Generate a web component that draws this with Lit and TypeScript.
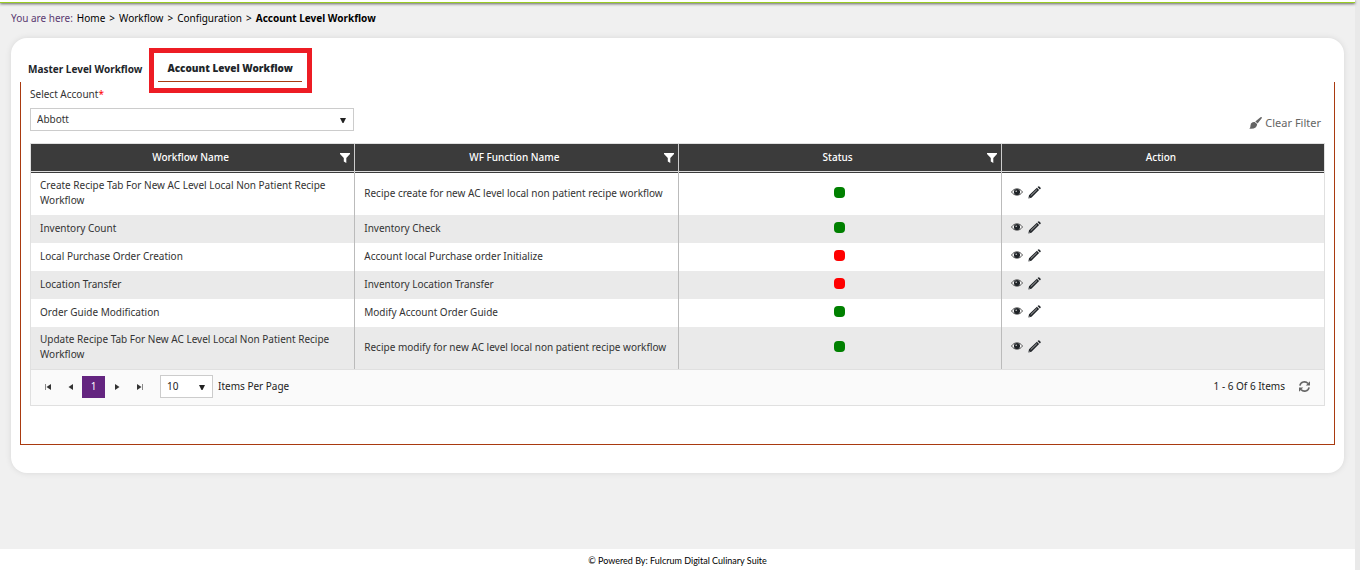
import { LitElement, html, css, svg } from "lit";
import { customElement, state } from "lit/decorators.js";
import { classMap } from "lit/directives/class-map.js";

interface WorkflowRow {
  name: string;
  fn: string;
  active: boolean;
}

const ROWS: WorkflowRow[] = [
  { name: "Create Recipe Tab For New AC Level Local Non Patient Recipe Workflow", fn: "Recipe create for new AC level local non patient recipe workflow", active: true },
  { name: "Inventory Count", fn: "Inventory Check", active: true },
  { name: "Local Purchase Order Creation", fn: "Account local Purchase order Initialize", active: false },
  { name: "Location Transfer", fn: "Inventory Location Transfer", active: false },
  { name: "Order Guide Modification", fn: "Modify Account Order Guide", active: true },
  { name: "Update Recipe Tab For New AC Level Local Non Patient Recipe Workflow", fn: "Recipe modify for new AC level local non patient recipe workflow", active: true },
];

const icon = (w: number, h: number, body: unknown) =>
  html`<svg width=${w} height=${h} viewBox="0 0 ${w} ${h}" aria-hidden="true">${body}</svg>`;

const filterIcon = icon(10, 10, svg`<path fill="#fff" d="M0 0h10v1L6.300 5v5L3.800 8.400V5L0 1z"/>`);
const eyeIcon = icon(12, 8, svg`<path fill="#fff" stroke="#444" stroke-width=".9" d="M.5 4C2 1.800 3.900.8 6 .8S10 1.800 11.500 4C10 6.200 8.100 7.200 6 7.200S2 6.200.5 4z"/><circle cx="6" cy="4" r="3.100" fill="#212529"/><circle cx="5.200" cy="3.200" r=".8" fill="#ccc"/>`);
const pencilIcon = icon(13, 13, svg`<path fill="#212529" d="M.4 12.600l.6-3.300 7.900-7.600 2.200 2.200-7.700 7.800zM9.500 1.100l.8-.7q.5-.4 1 0l1.300 1.300q.4.500 0 1l-.8.800z"/><path stroke="#bbb" stroke-width=".9" d="M2.700 9.700l6.200-6M1.300 11.200l.6.600"/>`);
const brushIcon = icon(13, 12, svg`<path fill="#656565" d="M12.700.2q.5.400 0 1.100L8.600 6.500 6.300 4.600 11.500.3q.7-.5 1.200-.1zM5.700 5.100l2.400 2q.1 2.200-1.500 3.400Q4.500 12 .2 11.600q1.300-.7 1.200-2.400Q1.300 6 3.600 5.300q1.100-.4 2.100-.2z"/>`);
const arrowDown = icon(6, 5, svg`<path fill="#222" d="M0 0h6L3.500 5h-1z"/>`);
const refreshIcon = icon(11, 11, svg`<path fill="none" stroke="#666" stroke-width="1.600" d="M.9 4.700A4.600 4.600 0 0 1 9 2.600M10.100 6.300A4.600 4.600 0 0 1 2 8.400"/><path fill="#666" d="M11 .2v4.200H6.800zM0 10.800V6.600h4.200z"/>`);
const firstIcon = icon(6, 6, svg`<path fill="#888" d="M0 0h1v6H0z"/><path fill="#333" d="M6 0v6L1.500 3z"/>`);
const prevIcon = icon(6, 6, svg`<path fill="#333" d="M5 0v6L.5 3z"/>`);
const nextIcon = icon(6, 6, svg`<path fill="#333" d="M1 0v6l4.500-3z"/>`);
const lastIcon = icon(6, 6, svg`<path fill="#888" d="M5 0h1v6H5z"/><path fill="#333" d="M0 0v6l4.500-3z"/>`);

@customElement("app-root")
export class AppRoot extends LitElement {
  @state() private tab = "account";

  static styles = css`
    :host {
      display: block;
      font-family: "Noto Sans", "Open Sans", sans-serif;
      font-size: 10px;
      line-height: 15px;
      color: #333;
    }
    *, *::before, *::after { box-sizing: border-box; }
    button, select { font: inherit; color: inherit; background: none; border: 0; margin: 0; padding: 0; }
    button { cursor: pointer; }
    a { color: inherit; text-decoration: none; }
    svg { display: block; }
    .page { display: flex; flex-direction: column; min-height: 100vh; background: #f0f0f0; border-right: 5px solid #e9e9e9; }
    .topbar { height: 3px; background: #fff; border-bottom: 1px solid #9c2; box-shadow: 0 1px 3px rgba(0, 0, 0, 0.6); }
    .crumbs { display: flex; gap: 4px; padding: 8px 11px 0; color: #000; }
    .lead { color: #5b3a70; }
    .crumbs b, .tab { font-weight: 700; }
    .card { margin: 12px 11px 0; padding: 12px 9px 28px; min-height: 435px; background: #fff; border-radius: 16px; box-shadow: 0 0 6px rgba(0, 0, 0, 0.1); display: flex; flex-direction: column; }
    .tabs { display: flex; align-items: flex-start; padding: 0 8px; gap: 16px; height: 32px; }
    .tab { position: relative; height: 32px; padding: 12px 0 5px; line-height: 15px; color: #212529; }
    .tab.active { padding: 11px 9px 5px; border-bottom: 1px solid #a93a10; font-weight: 900; }
    .tab.active::after { content: ""; position: absolute; inset: -2px -10px -12px -9px; border: 5px solid #ed1c24; }
    .panel { flex: 1; border: 1px solid #a93a10; border-top: 0; padding: 5px 9px 38px; }
    .filters { display: flex; justify-content: space-between; align-items: flex-end; margin-bottom: 12px; }
    .field { display: flex; flex-direction: column; gap: 6px; width: 25%; }
    .req { color: #f00; }
    .picker { position: relative; display: block; }
    .picker select { appearance: none; width: 100%; height: 23px; padding: 0 6px 1px; border: 1px solid #ccc; background: #fff; }
    .picker svg { position: absolute; right: 8px; top: 10px; pointer-events: none; }
    .clear { display: flex; align-items: center; gap: 3px; margin: 0 4px 1px 0; color: #656565; font-size: 11px; }
    .grid { border: 1px solid #e0e0e0; }
    table { width: 100%; border-collapse: separate; border-spacing: 0; table-layout: fixed; }
    th { height: 29px; padding: 0; background: #3b3b3b; color: #fff; font-weight: 500; border-left: 1px solid #ccc; box-shadow: inset 0 -1px #3b3b3b, inset 0 -2px #ddd; }
    th:first-child, td:first-child { border-left: 0; }
    .head { display: flex; align-items: center; padding: 0 4px 2px 0; }
    .head span { flex: 1; }
    .head.filterable { padding-left: 10px; }
    td { height: 28px; padding: 5px 9px 7px; border-left: 1px solid #bbb; vertical-align: middle; }
    tr:nth-child(even) td { background: #eaeaea; }
    .dot { display: block; width: 11px; height: 11px; margin: 0 auto; border-radius: 4px; background: #f00; }
    .dot.on { background: #008000; }
    td:nth-child(n + 3) { padding: 4px 9px 8px; }
    .actions { display: flex; align-items: center; gap: 5px; }
    .pager { display: flex; align-items: center; height: 36px; padding: 0 14px 2px 5px; background: #fafafa; border-top: 1px solid #e0e0e0; color: #222; }
    .step { display: grid; place-items: center; width: 23px; height: 22px; }
    .step.current { background: #642580; color: #fff; }
    .size { display: flex; align-items: center; gap: 5px; margin-left: 9px; }
    .size .picker { width: 53px; }
    .info { margin-left: auto; margin-right: 14px; }
    footer { margin-top: auto; height: 21px; padding-top: 4px; background: #fff; color: #000; font-family: Lato, sans-serif; font-size: 9px; line-height: 15px; text-align: center; }
  `;

  private tabButton(id: string, label: string) {
    return html`<button role="tab" aria-selected=${this.tab === id} class=${classMap({ tab: true, active: this.tab === id })}
      @click=${() => (this.tab = id)}>${label}</button>`;
  }

  render() {
    return html`
      <div class="page">
        <header class="topbar"></header>
        <nav class="crumbs" aria-label="Breadcrumb">
          <span class="lead">You are here:</span>
          <a href="#home">Home</a><span>&gt;</span><a href="#workflow">Workflow</a><span>&gt;</span><a href="#configuration">Configuration</a><span>&gt;</span><b>Account Level Workflow</b>
        </nav>
        <main class="card">
          <div class="tabs" role="tablist">
            ${this.tabButton("master", "Master Level Workflow")}
            ${this.tabButton("account", "Account Level Workflow")}
          </div>
          <section class="panel">
            <div class="filters">
              <div class="field">
                <label for="account">Select Account<span class="req">*</span></label>
                <span class="picker"><select id="account"><option>Abbott</option></select>${arrowDown}</span>
              </div>
              <button class="clear">${brushIcon}Clear Filter</button>
            </div>
            <div class="grid">
              <table>
                <thead>
                  <tr>
                    ${["Workflow Name", "WF Function Name", "Status"].map(
                      (t) => html`<th scope="col"><div class="head filterable"><span>${t}</span><button aria-label="Filter ${t}">${filterIcon}</button></div></th>`
                    )}
                    <th scope="col"><div class="head"><span>Action</span></div></th>
                  </tr>
                </thead>
                <tbody>
                  ${ROWS.map(
                    (r) => html`<tr>
                      <td>${r.name}</td>
                      <td>${r.fn}</td>
                      <td><span class=${classMap({ dot: true, on: r.active })} role="img" aria-label=${r.active ? "Active" : "Inactive"}></span></td>
                      <td><div class="actions"><button aria-label="View">${eyeIcon}</button><button aria-label="Edit">${pencilIcon}</button></div></td>
                    </tr>`
                  )}
                </tbody>
              </table>
              <div class="pager">
                <button class="step" aria-label="First page">${firstIcon}</button>
                <button class="step" aria-label="Previous page">${prevIcon}</button>
                <button class="step current">1</button>
                <button class="step" aria-label="Next page">${nextIcon}</button>
                <button class="step" aria-label="Last page">${lastIcon}</button>
                <div class="size">
                  <span class="picker"><select id="size"><option>10</option></select>${arrowDown}</span>
                  <label for="size">Items Per Page</label>
                </div>
                <span class="info">1 - 6 Of 6 Items</span>
                <button aria-label="Refresh">${refreshIcon}</button>
              </div>
            </div>
          </section>
        </main>
        <footer>© Powered By: Fulcrum Digital Culinary Suite</footer>
      </div>
    `;
  }
}
